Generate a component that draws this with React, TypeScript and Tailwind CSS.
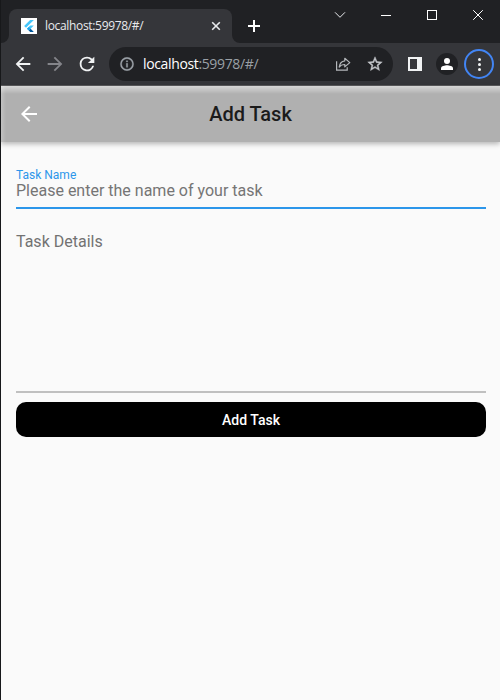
import React from "react";

function TabStrip() {
  return (
    <div className="flex h-[43px] bg-[#202124] font-['Open_Sans','Noto_Sans',sans-serif]">
      <svg className="h-[43px] w-2 shrink-0" viewBox="0 0 8 43" fill="#35363a">
        <path d="M8 35v8H0a8 8 0 0 0 8-8z" />
      </svg>
      <div className="mt-[9px] flex h-[34px] w-[223px] shrink-0 items-center rounded-t-lg bg-[#35363a] pl-3 pr-[11px]">
        <div className="flex size-4 items-center justify-center bg-white">
          <svg width="12" height="12" viewBox="0 0 24 24">
            <path d="M14.3 0L2.3 12l3.7 3.7L21.7 0z" fill="#45c7fb" />
            <path d="M14.3 11.1L7.9 17.5l3.7 3.7 10.1-10.1z" fill="#45c7fb" />
            <path d="M11.6 21.2l2.7 2.8h7.4l-6.4-6.5z" fill="#01579b" />
            <path d="M7.9 17.5l3.7-3.7 3.7 3.7-3.7 3.7z" fill="#1fa5ee" />
          </svg>
        </div>
        <span className="ml-2 whitespace-nowrap text-[12px] leading-4 tracking-[-0.33px] text-[#e8eaed]">
          localhost:59978/#/
        </span>
        <svg className="ml-auto" width="10" height="10" viewBox="0 0 10 10" stroke="#e8eaed" strokeWidth="1.6">
          <path d="M1.2 1.2l7.6 7.6M8.8 1.2L1.2 8.8" />
        </svg>
      </div>
      <svg className="h-[43px] w-2 shrink-0" viewBox="0 0 8 43" fill="#35363a">
        <path d="M0 35v8h8a8 8 0 0 1-8-8z" />
      </svg>
      <svg className="ml-[8px] mt-5 shrink-0" width="12" height="12" viewBox="0 0 12 12" stroke="#fff" strokeWidth="2">
        <path d="M6 0v12M0 6h12" />
      </svg>
      <div className="-mr-px ml-auto flex h-[30px] shrink-0 text-white">
        <div className="flex w-[46px] items-center justify-center">
          <svg width="12" height="8" viewBox="0 0 12 8" fill="none" stroke="#e8eaed" strokeWidth="1">
            <path d="M1 1.3l5 5 5-5" />
          </svg>
        </div>
        <div className="flex w-[46px] items-center justify-center">
          <div className="mt-px h-px w-[10px] bg-white" />
        </div>
        <div className="flex w-[46px] items-center justify-center">
          <div className="size-[10px] border border-white" />
        </div>
        <div className="flex w-[46px] items-center justify-center">
          <svg width="10" height="10" viewBox="0 0 10 10" stroke="#fff" strokeWidth="1">
            <path d="M0.2 0.2l9.6 9.6M9.8 0.2L0.2 9.8" />
          </svg>
        </div>
      </div>
    </div>
  );
}

function NavButton({ children }: { children: React.ReactNode }) {
  return <div className="flex h-8 w-8 shrink-0 items-center justify-center">{children}</div>;
}

function Toolbar() {
  return (
    <div className="flex h-[42px] items-center bg-[#35363a] pl-[6px]">
      <NavButton>
        <svg width="22" height="22" viewBox="0 0 24 24" fill="#f1f3f4">
          <path d="M20 11H7.83l5.59-5.59L12 4l-8 8 8 8 1.41-1.41L7.83 13H20v-2z" />
        </svg>
      </NavButton>
      <NavButton>
        <svg width="22" height="22" viewBox="0 0 24 24" fill="#84858a">
          <path d="M12 4l-1.41 1.41L16.17 11H4v2h12.17l-5.58 5.59L12 20l8-8z" />
        </svg>
      </NavButton>
      <NavButton>
        <svg width="22" height="22" viewBox="0 0 24 24" fill="#f1f3f4">
          <path d="M17.65 6.35A7.96 7.96 0 0 0 12 4a8 8 0 1 0 7.73 10h-2.08A6 6 0 1 1 12 6c1.66 0 3.14.69 4.22 1.78L13 11h7V4l-2.35 2.35z" />
        </svg>
      </NavButton>
      <div className="mx-[6px] flex h-[34px] w-[284px] shrink-0 items-center rounded-full bg-[#202124] pl-[10px] pr-[10px]">
        <svg width="16" height="16" viewBox="0 0 24 24" fill="#9aa0a6" stroke="#9aa0a6" strokeWidth=".5">
          <path d="M11 7h2v2h-2zm0 4h2v6h-2zm1-9a10 10 0 1 0 0 20 10 10 0 0 0 0-20zm0 18a8 8 0 1 1 0-16 8 8 0 0 1 0 16z" />
        </svg>
        <span className="ml-2 whitespace-nowrap font-['Open_Sans','Noto_Sans',sans-serif] text-[14px] leading-5 tracking-[-0.36px] text-[#9aa0a6]">
          <span className="text-white">localhost</span>:59978/#/
        </span>
        <svg className="ml-auto" width="16" height="16" viewBox="0 0 16 16" fill="none" stroke="#b4b7bb" strokeWidth="1.2">
          <path d="M1.6 5.2v8.9h10.6v-2.9" />
          <path d="M9.8 2.3l5 4.3-5 4.3V8.5c-2.7 0-4.4.8-5.6 2.6.4-3.4 2.2-5.9 5.6-6.3z" strokeLinejoin="round" />
        </svg>
        <svg className="ml-4" width="16" height="16" viewBox="1 1 22 22" fill="#c4c7cb">
          <path d="M22 9.24l-7.19-.62L12 2 9.19 8.63 2 9.24l5.46 4.73L5.82 21 12 17.27 18.18 21l-1.63-7.03L22 9.24zM12 15.4l-3.76 2.27 1-4.28-3.32-2.88 4.38-.38L12 6.1l1.71 4.04 4.38.38-3.32 2.88 1 4.28L12 15.4z" stroke="#c4c7cb" strokeWidth=".6" />
        </svg>
      </div>
      <NavButton>
        <div className="h-[14px] w-[14px] border-2 border-r-[5px] border-[#f1f3f4]" />
      </NavButton>
      <NavButton>
        <div className="flex size-[22px] items-center justify-center rounded-full bg-[#202124]">
          <svg width="12" height="12" viewBox="0 0 12 12" fill="#fff">
            <circle cx="6" cy="3" r="3" />
            <path d="M0 12v-1.8C0 8.2 4 7.3 6 7.3s6 .9 6 2.9V12z" />
          </svg>
        </div>
      </NavButton>
      <NavButton>
        <div className="flex size-[30px] shrink-0 flex-col items-center justify-center gap-[2px] rounded-full border-2 border-[#4285f4]">
          <div className="size-[3px] rounded-full bg-[#f1f3f4]" />
          <div className="size-[3px] rounded-full bg-[#f1f3f4]" />
          <div className="size-[3px] rounded-full bg-[#f1f3f4]" />
        </div>
      </NavButton>
    </div>
  );
}

function AppBar() {
  return (
    <header className="flex h-[56px] items-center bg-[#b0b0b0] bg-[linear-gradient(to_right,rgba(255,255,255,0.22),transparent_5px),linear-gradient(to_bottom,rgba(255,255,255,0.5),transparent_8px)] pl-4 shadow-[0_2px_5px_rgba(0,0,0,0.28)]">
      <svg className="shrink-0" width="24" height="24" viewBox="0 0 24 24" fill="#fff">
        <path d="M20 11H7.83l5.59-5.59L12 4l-8 8 8 8 1.41-1.41L7.83 13H20v-2z" />
      </svg>
      <h1 className="flex-1 pr-10 text-center text-[20px] font-medium leading-6 text-[#1b1b1b]">Add Task</h1>
    </header>
  );
}

export default function App() {
  return (
    <div className="h-[700px] w-[500px] overflow-hidden border-l border-[#17181a] bg-[#fafafa] font-[Roboto,sans-serif]">
      <TabStrip />
      <Toolbar />
      <div className="h-px bg-[#5b5b5d]" />
      <AppBar />
      <main className="flex flex-col pl-[15px] pr-[14px] pt-[26px]">
        <div className="h-[41px] border-b-2 border-[#2c96ea]">
          <div className="text-[12px] leading-[14px] text-[#2c96ea]">Task Name</div>
          <div className="text-[16px] leading-[18px] text-[#757575]">Please enter the name of your task</div>
        </div>
        <div className="h-[184px] border-b-2 border-[#c0c0c0] pt-6 text-[16px] leading-[18px] text-[#727272]">
          Task Details
        </div>
        <button className="mt-[9px] h-[35px] rounded-[10px] bg-black text-[14px] font-medium leading-4 text-white">
          Add Task
        </button>
      </main>
    </div>
  );
}
